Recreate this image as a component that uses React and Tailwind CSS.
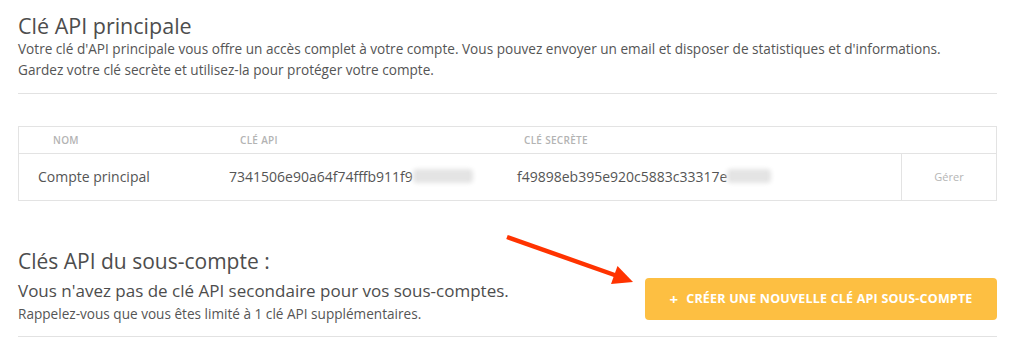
export default function App() {
  return (
    <div className="relative w-[1023px] h-[364px] overflow-hidden bg-white text-[#555] font-['Open_Sans',sans-serif]">
      <div className="pl-[18px] w-[997px]">
        <h1 className="pt-[14px] text-[21.5px] leading-[24px] text-[#4d4d4d]">Clé API principale</h1>
        <p className="text-[13.6px] leading-[21px] text-[#555]">
          Votre clé d'API principale vous offre un accès complet à votre compte. Vous pouvez envoyer un email et disposer de statistiques et d'informations.
          <br />
          Gardez votre clé secrète et utilisez-la pour protéger votre compte.
        </p>
        <div className="mt-[13px] border-t border-[#e2e2e2]" />

        <div className="mt-[32px] border border-[#e3e3e3]">
          <div className="grid grid-cols-[191px_288px_1fr_95px] h-[27px] items-center border-b border-[#e3e3e3] text-[10px] font-semibold tracking-[0.3px] text-[#b3b3b3]">
            <div className="pl-[34px]">NOM</div>
            <div className="pl-[30px]">CLÉ API</div>
            <div className="pl-[26px]">CLÉ SECRÈTE</div>
            <div />
          </div>
          <div className="grid grid-cols-[191px_288px_1fr_95px] h-[46px] items-center text-[14px] text-[#555]">
            <div className="pl-[19px] pb-[2px]">Compte principal</div>
            <div className="pl-[19px] pb-[2px] flex items-center">
              <span>7341506e90a64f74fffb911f9</span>
              <span className="inline-block w-[60px] h-[14px] bg-[#e4e4e4] rounded-[4px] blur-[2px]" />
            </div>
            <div className="pl-[19px] pb-[2px] flex items-center">
              <span>f49898eb395e920c5883c33317e</span>
              <span className="inline-block w-[44px] h-[14px] bg-[#e4e4e4] rounded-[4px] blur-[2px]" />
            </div>
            <div className="h-full border-l border-[#e3e3e3] flex items-center justify-center text-[11px] text-[#b5b5b5]">Gérer</div>
          </div>
        </div>

        <h2 className="mt-[47px] text-[21px] leading-[26px] text-[#4d4d4d]">Clés API du sous-compte :</h2>
        <div className="mt-[4px] flex items-start justify-between">
          <div>
            <p className="text-[17px] leading-[26px] text-[#4d4d4d]">Vous n'avez pas de clé API secondaire pour vos sous-comptes.</p>
            <p className="text-[13.6px] leading-[20px] text-[#555]">Rappelez-vous que vous êtes limité à 1 clé API supplémentaires.</p>
          </div>
          <button className="w-[352px] h-[42px] rounded-[4px] bg-[#fdbf42] text-white text-[12.5px] font-bold tracking-[0.2px] flex items-center justify-center gap-[8px]">
            <span className="text-[15px] font-bold leading-none">+</span>
            <span>CRÉER UNE NOUVELLE CLÉ API SOUS-COMPTE</span>
          </button>
        </div>
        <div className="mt-[12px] border-t border-[#e2e2e2]" />
      </div>

      <svg className="absolute left-0 top-0 pointer-events-none" width="1023" height="364" viewBox="0 0 1023 364">
        <line x1="507" y1="237" x2="616" y2="275.5" stroke="#ff3300" strokeWidth="4.5" />
        <polygon points="633,282 611,284 617.5,266" fill="#ff3300" />
      </svg>
    </div>
  );
}
